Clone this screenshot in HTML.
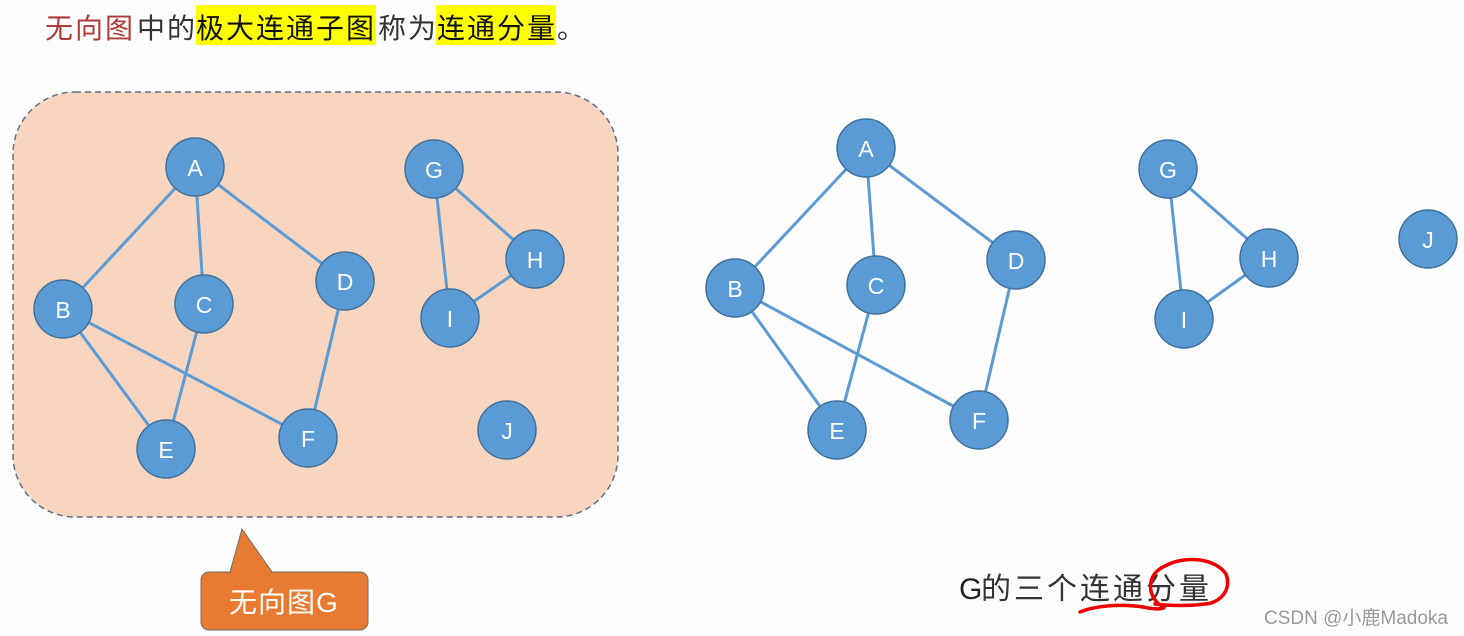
<!DOCTYPE html>
<html><head><meta charset="utf-8"><style>
html,body{margin:0;padding:0;background:#fdfdfd;width:1464px;height:636px;overflow:hidden}
svg{display:block}
text{font-family:"Liberation Sans","Noto Sans CJK SC",sans-serif}
</style></head><body>
<svg width="1464" height="636" viewBox="0 0 1464 636" xmlns="http://www.w3.org/2000/svg">
<rect x="196" y="5" width="180" height="40" fill="#ffff00"/>
<rect x="436" y="5" width="120" height="40" fill="#ffff00"/>
<g font-size="28" letter-spacing="2">
<text x="45" y="38" fill="#b03a3a">无向图</text>
<text x="137" y="38" fill="#333">中的</text>
<text x="196" y="38" fill="#111">极大连通子图</text>
<text x="378" y="38" fill="#333">称为</text>
<text x="437" y="38" fill="#111">连通分量</text>
<text x="557" y="38" fill="#333">。</text>
</g>
<rect x="13" y="92" width="605" height="425" rx="62" fill="#f8d5bf" stroke="#5f7089" stroke-width="1.5" stroke-dasharray="6,4"/>
<path d="M242,529 L272,572 L230,572 Z" fill="#e97a31" stroke="#6b6b6b" stroke-width="1"/>
<rect x="201" y="572" width="167" height="58" rx="8" fill="#e97a31" stroke="#6b6b6b" stroke-width="1"/>
<path d="M231,572 L271,572" stroke="#e97a31" stroke-width="3"/>
<text x="229" y="612" font-size="28" letter-spacing="1" fill="#fff">无向图G</text>
<g stroke="#5b9bd5" stroke-width="3">
<line x1="195" y1="167" x2="63" y2="309"/><line x1="195" y1="167" x2="204" y2="304"/><line x1="195" y1="167" x2="345" y2="281"/>
<line x1="63" y1="309" x2="166" y2="449"/><line x1="63" y1="309" x2="308" y2="438"/><line x1="204" y1="304" x2="166" y2="449"/>
<line x1="345" y1="281" x2="308" y2="438"/><line x1="434" y1="169" x2="535" y2="259"/><line x1="434" y1="169" x2="450" y2="318"/><line x1="450" y1="318" x2="535" y2="259"/>
<line x1="866" y1="148" x2="735" y2="288"/><line x1="866" y1="148" x2="876" y2="285"/><line x1="866" y1="148" x2="1016" y2="260"/>
<line x1="735" y1="288" x2="837" y2="430"/><line x1="735" y1="288" x2="979" y2="420"/><line x1="876" y1="285" x2="837" y2="430"/>
<line x1="1016" y1="260" x2="979" y2="420"/><line x1="1168" y1="169" x2="1269" y2="258"/><line x1="1168" y1="169" x2="1184" y2="319"/><line x1="1184" y1="319" x2="1269" y2="258"/>
</g>
<g fill="#5b9bd5" stroke="#41719c" stroke-width="1.5">
<circle cx="195" cy="167" r="29"/><circle cx="63" cy="309" r="29"/><circle cx="204" cy="304" r="29"/><circle cx="345" cy="281" r="29"/><circle cx="166" cy="449" r="29"/><circle cx="308" cy="438" r="29"/><circle cx="434" cy="169" r="29"/><circle cx="535" cy="259" r="29"/><circle cx="450" cy="318" r="29"/><circle cx="507" cy="430" r="29"/>
<circle cx="866" cy="148" r="29"/><circle cx="735" cy="288" r="29"/><circle cx="876" cy="285" r="29"/><circle cx="1016" cy="260" r="29"/><circle cx="837" cy="430" r="29"/><circle cx="979" cy="420" r="29"/><circle cx="1168" cy="169" r="29"/><circle cx="1269" cy="258" r="29"/><circle cx="1184" cy="319" r="29"/><circle cx="1428" cy="239" r="29"/>
</g>
<g fill="#fff" font-size="23" text-anchor="middle">
<text x="195" y="176">A</text><text x="63" y="318">B</text><text x="204" y="313">C</text><text x="345" y="290">D</text><text x="166" y="458">E</text><text x="308" y="447">F</text><text x="434" y="178">G</text><text x="535" y="268">H</text><text x="450" y="327">I</text><text x="507" y="439">J</text>
<text x="866" y="157">A</text><text x="735" y="297">B</text><text x="876" y="294">C</text><text x="1016" y="269">D</text><text x="837" y="439">E</text><text x="979" y="429">F</text><text x="1168" y="178">G</text><text x="1269" y="267">H</text><text x="1184" y="328">I</text><text x="1428" y="248">J</text>
</g>
<text x="959" y="599" font-size="30" fill="#222">G</text>
<text x="981" y="599" font-size="30" letter-spacing="3" fill="#333">的三个连通分量</text>
<path d="M1080,612 C1100,604 1130,604 1148,608 C1160,610 1170,608 1160,605 C1148,596 1145,575 1165,566 C1185,555 1215,558 1226,574 C1232,590 1220,603 1205,604 C1190,606 1170,606 1155,604" fill="none" stroke="#e00" stroke-width="3.5" stroke-linecap="round"/>
<text x="1264" y="624" font-size="19" fill="#999">CSDN @小鹿Madoka</text>
</svg>
</body></html>
